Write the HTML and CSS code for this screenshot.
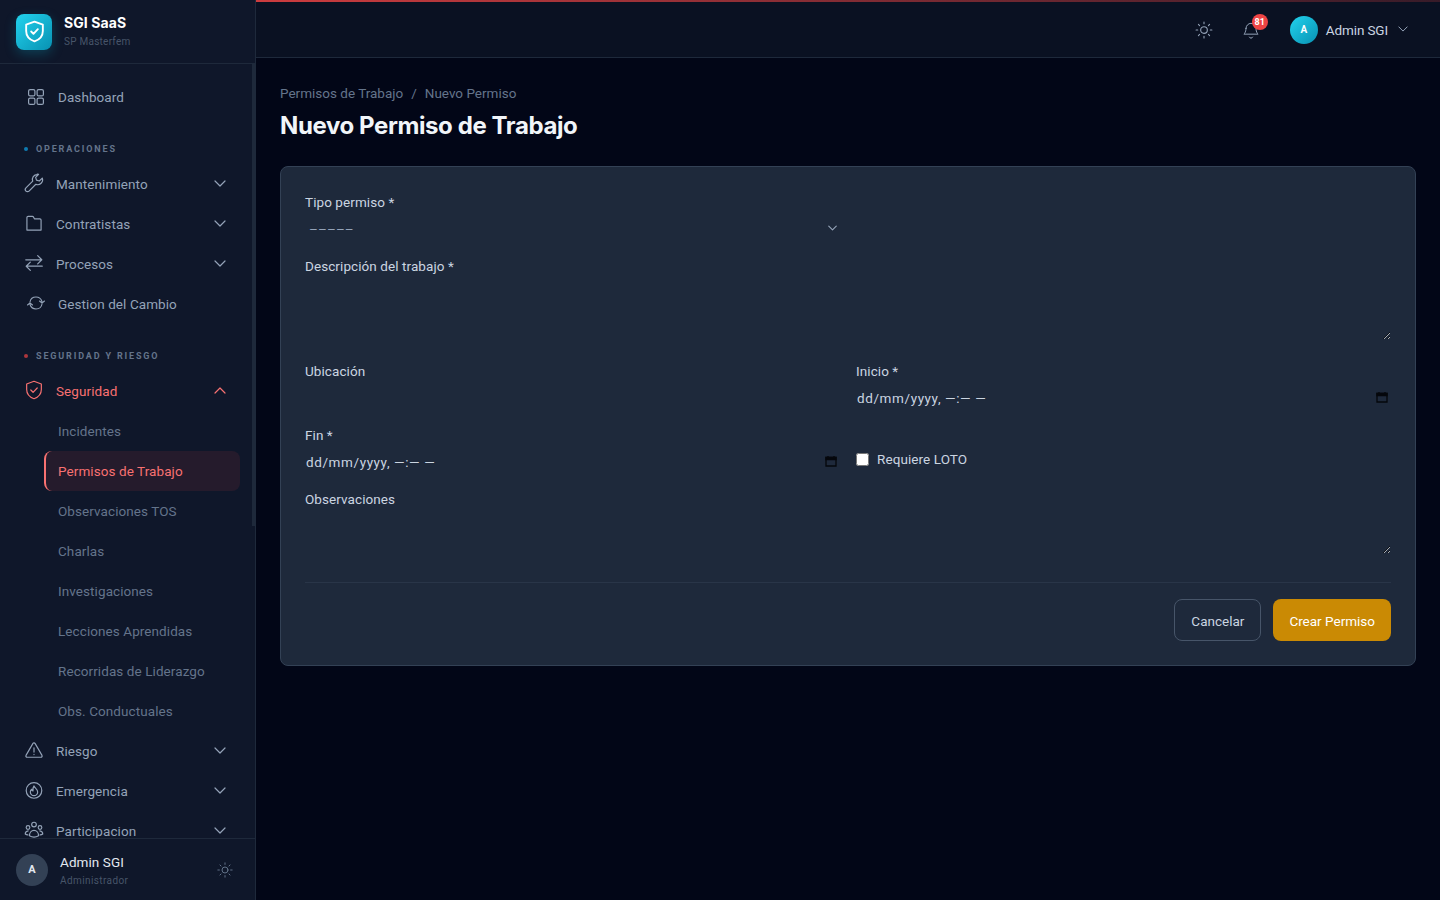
FILE: index.html
```html
<!DOCTYPE html>
<html lang="es">

<head>
    <meta charset="UTF-8">
    <meta name="viewport" content="width=device-width, initial-scale=1.0">
    <title>Nuevo Permiso de Trabajo</title>
    <link rel="stylesheet" href="styles.css">
</head>

<body>
    <aside class="sidebar">
        <div class="brand">
            <div class="brand-logo">
                <svg viewBox="0 0 24 24">
                    <path d="M12 2.500l8 3v6c0 5-3.400 8.400-8 10-4.600-1.600-8-5-8-10v-6z"/>
                    <path d="M8.800 12l2.200 2.200 4.200-4.400"/>
                </svg>
            </div>
            <div>
                <div class="brand-name">SGI SaaS</div>
                <div class="brand-sub">SP Masterfem</div>
            </div>
        </div>

        <nav class="nav">
            <a class="nav-link plain">
                <svg class="plain-icon" viewBox="0 0 16 16"><rect x="0.600" y="0.600" width="6.300" height="6.300" rx="1.500"/><rect x="9.100" y="0.600" width="6.300" height="6.300" rx="1.500"/><rect x="0.600" y="9.100" width="6.300" height="6.300" rx="1.500"/><rect x="9.100" y="9.100" width="6.300" height="6.300" rx="1.500"/></svg>
                Dashboard
            </a>

            <div class="nav-section"><span class="dot dot-blue"></span>OPERACIONES</div>
            <a class="nav-link">
                <svg class="nav-icon" viewBox="0 0 24 24"><path d="M15.500 2.800a5.300 5.300 0 0 0-4.900 7.200L3.200 17.400a2.400 2.400 0 0 0 3.400 3.400l7.400-7.400a5.300 5.300 0 0 0 7-6.800l-3.200 3.200-3.100-.9-.9-3.100 3.200-3.200a5.300 5.300 0 0 0-1.500-.2z"/></svg>
                <span class="nav-text">Mantenimiento</span>
                <svg class="chev" viewBox="0 0 12 7"><path d="M1 1l5 5 5-5"/></svg>
            </a>
            <a class="nav-link">
                <svg class="nav-icon small" viewBox="0 0 24 24"><path d="M3.500 20.500V5.500A1.500 1.500 0 0 1 5 4h5c.6 0 1 .2 1.300.7L12.500 7H19a1.500 1.500 0 0 1 1.500 1.500v12z"/></svg>
                <span class="nav-text">Contratistas</span>
                <svg class="chev" viewBox="0 0 12 7"><path d="M1 1l5 5 5-5"/></svg>
            </a>
            <a class="nav-link">
                <svg class="nav-icon" viewBox="0 0 24 24"><path d="M3 8.500h17M16 4l4.500 4.500L16 13M21 15.500H4M8 11l-4.500 4.500L8 20"/></svg>
                <span class="nav-text">Procesos</span>
                <svg class="chev" viewBox="0 0 12 7"><path d="M1 1l5 5 5-5"/></svg>
            </a>
            <a class="nav-link plain">
                <svg class="cycle-icon" viewBox="0 0 18 14"><path d="M3 6C3.500 3 5.500 1 9 1c3 0 5 1.500 6 4.500M12.500 5l2.500 2 2.500-2M15 8c-.5 3-2.500 5-6 5-3 0-5-1.500-6-4.500M.500 9L3 7l2.500 2"/></svg>
                Gestion del Cambio
            </a>

            <div class="nav-section"><span class="dot dot-red"></span>SEGURIDAD Y RIESGO</div>
            <a class="nav-link open">
                <svg class="nav-icon" viewBox="0 0 24 24"><path d="M12 2.500l8 3v6c0 5-3.400 8.400-8 10-4.600-1.600-8-5-8-10v-6z"/><path d="M8.500 12l2.500 2.500 4.500-4.700"/></svg>
                <span class="nav-text">Seguridad</span>
                <svg class="chev" viewBox="0 0 12 7"><path d="M1 6l5-5 5 5"/></svg>
            </a>
            <a class="sub-link">Incidentes</a>
            <a class="sub-link active">Permisos de Trabajo</a>
            <a class="sub-link">Observaciones TOS</a>
            <a class="sub-link">Charlas</a>
            <a class="sub-link">Investigaciones</a>
            <a class="sub-link">Lecciones Aprendidas</a>
            <a class="sub-link">Recorridas de Liderazgo</a>
            <a class="sub-link">Obs. Conductuales</a>
            <a class="nav-link">
                <svg class="nav-icon small" viewBox="0 0 24 24"><path d="M10.600 4.300L2.400 18.500A1.500 1.500 0 0 0 3.700 20.700h16.600a1.500 1.500 0 0 0 1.300-2.200L13.400 4.300a1.600 1.600 0 0 0-2.800 0zM12 9.500v5M12 17.300v.2"/></svg>
                <span class="nav-text">Riesgo</span>
                <svg class="chev" viewBox="0 0 12 7"><path d="M1 1l5 5 5-5"/></svg>
            </a>
            <a class="nav-link">
                <svg class="nav-icon" viewBox="0 0 24 24"><circle cx="12" cy="12.500" r="8.500"/><path d="M12 7.500c.5 2.200 4 3.300 4 6.700a4 4 0 0 1-8 0c0-1.400.6-2.300 1.400-3 .3 1.100.9 1.600 1.500 1.700-.3-1.900 0-3.900 1.100-5.400z"/></svg>
                <span class="nav-text">Emergencia</span>
                <svg class="chev" viewBox="0 0 12 7"><path d="M1 1l5 5 5-5"/></svg>
            </a>
            <a class="nav-link">
                <svg class="nav-icon small" viewBox="0 0 24 24"><circle cx="12" cy="5.500" r="2.800"/><circle cx="4.800" cy="9" r="2.200"/><circle cx="19.200" cy="9" r="2.200"/><path d="M6.500 19c0-4 2.500-6.500 5.500-6.500s5.500 2.500 5.500 6.500c-3.500 2-7.500 2-11 0z"/><path d="M5 13c-2 .3-3.500 1.500-3.500 3.800.9.7 2 1 3.200 1.100M19 13c2 .3 3.500 1.500 3.500 3.800-.9.7-2 1-3.200 1.100"/></svg>
                <span class="nav-text">Participacion</span>
                <svg class="chev" viewBox="0 0 12 7"><path d="M1 1l5 5 5-5"/></svg>
            </a>
        </nav>
        <div class="side-thumb"></div>

        <div class="side-user">
            <div class="side-avatar">A</div>
            <div class="side-user-info">
                <div class="side-user-name">Admin SGI</div>
                <div class="side-user-role">Administrador</div>
            </div>
            <svg class="sun sun-small" viewBox="0 0 24 24"><circle cx="12" cy="12" r="4"/><path d="M12 2.500v2M12 19.500v2M2.500 12h2M19.500 12h2M5.300 5.300l1.400 1.400M17.300 17.300l1.400 1.400M5.300 18.700l1.400-1.400M17.300 6.700l1.400-1.400"/></svg>
        </div>
    </aside>

    <div class="main">
        <header class="topbar">
            <svg class="sun" viewBox="0 0 24 24"><circle cx="12" cy="12" r="4"/><path d="M12 2.500v2M12 19.500v2M2.500 12h2M19.500 12h2M5.300 5.300l1.400 1.400M17.300 17.300l1.400 1.400M5.300 18.700l1.400-1.400M17.300 6.700l1.400-1.400"/></svg>
            <div class="bell">
                <svg viewBox="0 0 24 24"><path d="M6 10a6 6 0 0 1 12 0c0 5 2.500 7 2.500 7h-17S6 15 6 10z"/><path d="M10 20.500a2.200 2.200 0 0 0 4 0"/></svg>
                <span class="badge">81</span>
            </div>
            <div class="user-menu">
                <div class="top-avatar">A</div>
                <span class="top-name">Admin SGI</span>
                <svg class="chev" viewBox="0 0 12 7"><path d="M1 1l5 5 5-5"/></svg>
            </div>
        </header>

        <main class="content">
            <div class="breadcrumb"><span>Permisos de Trabajo</span><span class="sep">/</span><span>Nuevo Permiso</span></div>
            <h1 class="page-title">Nuevo Permiso de Trabajo</h1>

            <form class="card">
                <div class="form-grid">
                    <div class="field">
                        <label class="field-label">Tipo permiso *</label>
                        <div class="select-wrap">
                            <select class="field-select"><option>–––––</option></select>
                            <svg class="select-chev" viewBox="0 0 12 7"><path d="M1 1l5 5 5-5"/></svg>
                        </div>
                    </div>
                    <div class="field full">
                        <label class="field-label">Descripción del trabajo *</label>
                        <textarea class="field-area area-big"></textarea>
                    </div>
                    <div class="field">
                        <label class="field-label">Ubicación</label>
                        <input class="field-input" type="text">
                    </div>
                    <div class="field">
                        <label class="field-label">Inicio *</label>
                        <div class="date-wrap">
                            <input class="field-input" type="text" placeholder="dd/mm/yyyy, —:— —">
                            <svg class="cal" viewBox="0 0 12 12"><path d="M1 2.500h10v8.500H1z"/><path class="cal-top" d="M1 2.500h10v2H1zM3 1v1.500M9 1v1.500"/></svg>
                        </div>
                    </div>
                    <div class="field">
                        <label class="field-label">Fin *</label>
                        <div class="date-wrap">
                            <input class="field-input" type="text" placeholder="dd/mm/yyyy, —:— —">
                            <svg class="cal" viewBox="0 0 12 12"><path d="M1 2.500h10v8.500H1z"/><path class="cal-top" d="M1 2.500h10v2H1zM3 1v1.500M9 1v1.500"/></svg>
                        </div>
                    </div>
                    <label class="check-row"><input type="checkbox"> Requiere LOTO</label>
                    <div class="field full">
                        <label class="field-label">Observaciones</label>
                        <textarea class="field-area area-small"></textarea>
                    </div>
                </div>
                <div class="actions">
                    <button type="button" class="btn btn-cancel">Cancelar</button>
                    <button type="button" class="btn btn-primary">Crear Permiso</button>
                </div>
            </form>
        </main>
    </div>
</body>

</html>
```

FILE: styles.css
```css
* {
    box-sizing: border-box;
}

body {
    margin: 0;
    height: 100vh;
    overflow: hidden;
    display: flex;
    background-color: #020617;
    font-family: Roboto, "Liberation Sans", sans-serif;
    font-size: 13.5px;
    letter-spacing: 0.08px;
    color: #94a3b8;
}

svg {
    fill: none;
    stroke: currentColor;
    stroke-width: 1.5;
    stroke-linecap: round;
    stroke-linejoin: round;
    flex-shrink: 0;
}

/* sidebar */

.sidebar {
    position: relative;
    width: 256px;
    height: 900px;
    flex-shrink: 0;
    display: flex;
    flex-direction: column;
    background-color: #0f172a;
    border-right: 1px solid #1e293b;
}

.brand {
    height: 64px;
    flex-shrink: 0;
    display: flex;
    align-items: center;
    gap: 12px;
    padding: 0 16px;
    border-bottom: 1px solid #1e293b;
}

.brand-logo {
    width: 36px;
    height: 36px;
    display: flex;
    align-items: center;
    justify-content: center;
    border-radius: 8px;
    background: linear-gradient(135deg, #22d3ee, #0891b2);
    box-shadow: 0 4px 12px rgba(6, 182, 212, 0.25);
    color: #fff;
}

.brand-logo svg {
    width: 25px;
    height: 25px;
    stroke-width: 1.8;
}

.brand-name {
    font-family: Inter, sans-serif;
    font-size: 14px;
    font-weight: 700;
    line-height: 20px;
    color: #fff;
    letter-spacing: 0.1px;
}

.brand-sub {
    margin-top: 1px;
    font-size: 10px;
    line-height: 16px;
    color: #475569;
    letter-spacing: 0.25px;
}

.nav {
    flex: 1;
    overflow: hidden;
    padding: 13px 15px 0 0;
}

.nav-link {
    height: 40px;
    display: flex;
    align-items: center;
    padding-left: 23px;
    padding-right: 14px;
    color: #94a3b8;
}

.nav-link.plain {
    padding-left: 28px;
}

.nav-link.open {
    color: #f87171;
}

.nav-icon {
    width: 22px;
    height: 22px;
    margin-top: -2px;
    margin-right: 11px;
    stroke-width: 1.3;
}

.nav-icon.small {
    width: 20px;
    height: 20px;
    margin-left: 1px;
    margin-right: 12px;
    stroke-width: 1.4;
}

.plain-icon {
    width: 16px;
    height: 16px;
    margin-right: 14px;
    stroke-width: 1.2;
}

.cycle-icon {
    width: 18px;
    height: 14px;
    margin-left: -1px;
    margin-top: -2px;
    margin-right: 13px;
    stroke-width: 1.1;
}

.nav-text {
    flex: 1;
}

.chev {
    width: 12px;
    height: 7px;
    margin-top: -2px;
    stroke-width: 1.2;
}

.nav-section {
    height: 47px;
    display: flex;
    align-items: center;
    padding: 16px 0 0 24px;
    font-size: 9px;
    font-weight: 700;
    letter-spacing: 1.85px;
    color: #64748b;
}

.dot {
    width: 4px;
    height: 4px;
    border-radius: 50%;
    margin-right: 8px;
}

.dot-blue {
    background-color: #0ea5e9;
    opacity: 0.7;
}

.dot-red {
    background-color: #ef4444;
    opacity: 0.7;
}

.sub-link {
    height: 40px;
    display: flex;
    align-items: center;
    margin-left: 44px;
    padding-left: 14px;
    color: #64748b;
}

.sub-link.active {
    padding-left: 12px;
    border-left: 2px solid #f87171;
    border-radius: 8px;
    background-color: rgba(239, 68, 68, 0.1);
    color: #f87171;
}

.side-thumb {
    position: absolute;
    top: 64px;
    right: 0;
    width: 3px;
    height: 462px;
    background-color: #1e293b;
}

.side-user {
    position: absolute;
    left: 0;
    right: 0;
    bottom: 0;
    height: 62px;
    display: flex;
    align-items: center;
    padding: 0 21px 0 16px;
    background-color: #0f172a;
    border-top: 1px solid #1e293b;
}

.side-avatar {
    width: 32px;
    height: 32px;
    display: flex;
    align-items: center;
    justify-content: center;
    border-radius: 50%;
    background-color: #334155;
    color: #e2e8f0;
    font-size: 11px;
    font-weight: 700;
}

.side-user-info {
    flex: 1;
    margin-left: 12px;
}

.side-user-name {
    margin-top: 2px;
    line-height: 20px;
    color: #e2e8f0;
}

.side-user-role {
    margin-top: 1px;
    font-size: 10px;
    line-height: 16px;
    color: #475569;
    letter-spacing: 0.4px;
}

.sun {
    width: 20px;
    height: 20px;
    color: #94a3b8;
    stroke-width: 1.3;
}

.sun-small {
    width: 18px;
    height: 18px;
    color: #64748b;
}

/* top bar */

.main {
    flex: 1;
    min-width: 0;
    display: flex;
    flex-direction: column;
}

.topbar {
    height: 58px;
    flex-shrink: 0;
    display: flex;
    align-items: center;
    justify-content: flex-end;
    padding: 2px 32px 0 0;
    background: linear-gradient(90deg, rgba(239, 68, 68, 0.85), rgba(239, 68, 68, 0.2)) top / 100% 2px no-repeat, #0a1122;
    border-bottom: 1px solid #1e293b;
}

.bell {
    position: relative;
    width: 20px;
    height: 20px;
    margin-left: 27px;
    color: #94a3b8;
}

.bell svg {
    display: block;
    width: 20px;
    height: 20px;
    stroke-width: 1.2;
}

.badge {
    position: absolute;
    top: -6px;
    left: 11px;
    width: 16px;
    height: 16px;
    display: flex;
    align-items: center;
    justify-content: center;
    border-radius: 50%;
    background-color: #ef4444;
    color: #fff;
    font-size: 9px;
    font-weight: 700;
}

.user-menu {
    display: flex;
    align-items: center;
    margin-left: 29px;
}

.top-avatar {
    width: 28px;
    height: 28px;
    display: flex;
    align-items: center;
    justify-content: center;
    border-radius: 50%;
    background: linear-gradient(135deg, #22d3ee, #0891b2);
    color: #fff;
    font-size: 10px;
    font-weight: 700;
}

.top-name {
    margin: 0 10px 0 8px;
    color: #cbd5e1;
    letter-spacing: -0.12px;
}

.user-menu .chev {
    width: 10px;
    height: 6px;
    color: #94a3b8;
}

/* page */

.content {
    padding: 25px 24px;
}

.breadcrumb {
    display: flex;
    height: 20px;
    align-items: center;
    color: #64748b;
    letter-spacing: 0;
}

.sep {
    margin: 0 8px;
}

.page-title {
    margin: 7px 0 24px;
    font-family: Inter, sans-serif;
    font-size: 24px;
    font-weight: 700;
    line-height: 32px;
    letter-spacing: -0.4px;
    color: #f1f5f9;
}

.card {
    height: 500px;
    padding: 25px 24px 24px;
    background-color: #1e293b;
    border: 1px solid #334155;
    border-radius: 8px;
}

.form-grid {
    display: grid;
    grid-template-columns: 1fr 1fr;
    gap: 16px;
}

.full {
    grid-column: 1 / -1;
}

.field-label {
    display: block;
    height: 20px;
    margin-bottom: 4px;
    padding-top: 1px;
    line-height: 19px;
    color: #cbd5e1;
}

.select-wrap,
.date-wrap {
    position: relative;
}

.field-select {
    display: block;
    width: 100%;
    height: 24px;
    border: 0;
    appearance: none;
    padding: 2px 4px 0;
    background: transparent;
    font: inherit;
    letter-spacing: 0.1px;
    color: #94a3b8;
}

.select-chev {
    position: absolute;
    top: 9px;
    right: 3px;
    width: 9px;
    height: 6px;
    color: #94a3b8;
}

.field-input {
    display: block;
    width: 100%;
    height: 24px;
    border: 0;
    padding: 3px 1px 1px;
    background: transparent;
    font: inherit;
    color: #cbd5e1;
    letter-spacing: 0.6px;
    outline: none;
}

.field-input::placeholder {
    color: #cbd5e1;
    opacity: 1;
}

.cal {
    position: absolute;
    top: 6px;
    right: 3px;
    width: 12px;
    height: 12px;
    color: #05070c;
    stroke-width: 1.3;
    stroke-linecap: butt;
    stroke-linejoin: miter;
}

.cal-top {
    fill: #05070c;
}

.field-area {
    display: block;
    width: 100%;
    border: 0;
    padding: 2px;
    background: transparent;
    font: inherit;
    color: #cbd5e1;
    outline: none;
}

.area-big {
    height: 60px;
    margin-bottom: 5px;
}

.area-small {
    height: 41px;
}

.check-row {
    display: flex;
    align-items: center;
    gap: 8px;
    padding-top: 20px;
    color: #cbd5e1;
}

.check-row input {
    width: 13px;
    height: 13px;
    margin: 0;
}

.actions {
    display: flex;
    justify-content: flex-end;
    gap: 12px;
    margin-top: 28px;
    padding-top: 16px;
    border-top: 1px solid #293548;
}

.btn {
    height: 42px;
    padding: 2px 16px 0;
    border-radius: 8px;
    font: inherit;
}

.btn-cancel {
    background: transparent;
    border: 1px solid #475569;
    color: #cbd5e1;
}

.btn-primary {
    background-color: #ca8a04;
    border: 0;
    color: #fff;
}
```
